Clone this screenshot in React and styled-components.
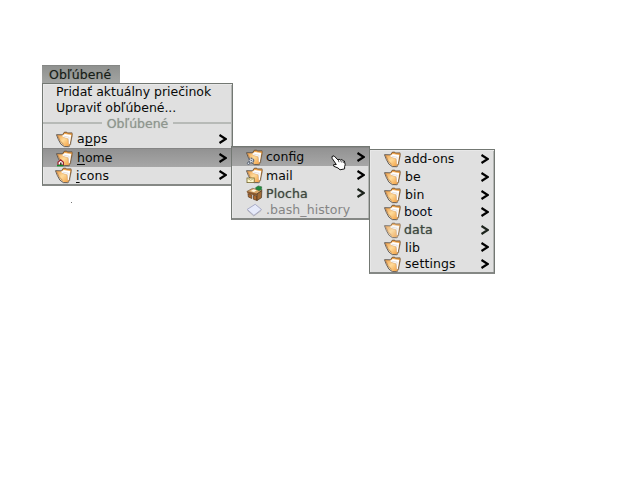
import React from "react";
import styled, { createGlobalStyle, css } from "styled-components";

const GlobalStyle = createGlobalStyle`
  body { margin: 0; background: #fff; overflow: hidden; }
  * { box-sizing: border-box; }
`;

const Desktop = styled.main`
  position: relative;
  width: 640px;
  height: 480px;
  padding: 65px 0 0 42px;
  background: #fff;
  font-family: "DejaVu Sans", sans-serif;
  font-size: 12.5px;
  color: #101210;
  cursor: default;
`;

const MenuTitle = styled.div`
  width: 78px;
  height: 18px;
  padding-left: 7px;
  line-height: 17px;
  letter-spacing: 0.08px;
  color: #171c17;
  background: linear-gradient(#8f918f, #a3a5a3);
  border-top: 1px solid #858785;
  white-space: nowrap;
  text-shadow: 0 0 1px #6b716b;
`;

const Menu = styled.div`
  display: flex;
  flex-direction: column;
  width: ${(p) => p.$width}px;
  height: ${(p) => p.$height}px;
  background: #e0e0e0;
  border: 1px solid #737873;
  border-bottom: 2px solid #858885;
  box-shadow: inset 1px 1px #e8e8e8, inset -1px 0 #b4b6b4;
`;

const Submenu = styled(Menu)`
  position: absolute;
  left: ${(p) => p.$x}px;
  top: ${(p) => p.$y}px;
`;

const Row = styled.div`
  display: flex;
  flex: none;
  align-items: center;
  height: ${(p) => p.$h}px;
  padding-left: ${(p) => p.$inset ?? 13}px;
  padding-right: ${(p) => p.$end ?? 5}px;
  ${(p) =>
    p.$active &&
    css`
      background: linear-gradient(#929292, #a7a7a7);
      border-top: 1px solid #858585;
    `}
`;

const Glyph = styled.svg`
  flex: none;
  width: 18px;
  height: 17px;
  overflow: visible;
`;

const Label = styled.span`
  flex: 1;
  margin-left: ${(p) => p.$gap ?? 3}px;
  margin-top: ${(p) => -(p.$lift ?? 0) * 2}px;
  line-height: 15px;
  white-space: nowrap;
  letter-spacing: ${(p) => p.$track ?? 0}px;
  color: ${(p) => (p.$tone === "muted" ? "#858585" : p.$tone === "soft" ? "#3f483f" : p.$tone === "blue" ? "#050b20" : "#080908")};
  ${(p) => p.$tone === "soft" && css`text-shadow: 0 0 1px #687068;`}
`;

const Key = styled.span`
  text-decoration: underline;
  text-decoration-thickness: 1px;
  text-underline-offset: 2px;
  text-decoration-skip-ink: none;
`;

const Chevron = styled.svg`
  flex: none;
  width: 9px;
  height: 10px;
  margin-top: -1px;
`;

const Separator = styled.div`
  display: flex;
  align-items: center;
  flex: none;
  gap: 5px;
  height: 16px;
  color: #8f968f;
  text-shadow: 0 0 1px #a3aaa3;
  line-height: 16px;
  &::before, &::after {
    content: "";
    height: 2px;
    background: #b7bab7;
    flex: 1;
  }
`;

const SeparatorText = styled.span`
  margin-top: 1px;
`;

const Pointer = styled.svg`
  position: absolute;
  left: 331px;
  top: 155px;
  width: 16px;
  height: 16px;
`;

const Speck = styled.i`
  position: absolute;
  left: 71px;
  top: 202px;
  width: 1px;
  height: 1px;
  background: #777;
`;

function Folder({ badge, soft }) {
  return (
    <Glyph viewBox="0 0 18 17">
      <defs>
        <linearGradient id="folderFace" x1="0" y1="0" x2="1" y2="1">
          <stop offset="0" stopColor="#ed9a44" />
          <stop offset=".5" stopColor="#ffdb9a" />
          <stop offset="1" stopColor="#f2a044" />
        </linearGradient>
      </defs>
      <g opacity={soft ? 0.8 : 1}>
        <path d="M9 15.7l4.6-.4 1.6-2 1.3-8-2 .5z" fill="#666" opacity=".45" />
        <path d="M6.3 4.4L8.2 1.3l2.4-.2.8.9 4.8-.1.3 2-2.5 10.6-3 .8z" fill="#f0a64d" />
        <path d="M6.3 4.2L8.2 1.3l2.4-.2.8.9 4.8-.1" fill="none" stroke="#5c3d22" strokeWidth=".8" />
        <path d="M16.3 2.4l-.3 2.5-2.1 9" fill="none" stroke="#54463b" strokeWidth=".7" />
        <path d="M6 5l2.7-1.9 6.5 1-1.3 8.7-1.6 1.2-3.6-2z" fill="#ffffff" />
        <path d="M7.5 5.1l5.6 1.1-.8 5" fill="none" stroke="#d5cec9" strokeWidth=".6" />
        <path d="M.6 3.8l5.3.2 1.2 2.2 4.9 1.6.8 7.6-4.2.1-4.6-4.2z" fill="url(#folderFace)" />
        <path d="M7.1 6.3L12 7.8l.8 7" fill="none" stroke="#c78442" strokeWidth=".4" />
        <path d="M6 3.8L.5 3.7l1.8 4.7 2.6 4.7 3.4 2.5 4.4.1 1.2-.9" fill="none" stroke="#57504b" strokeWidth=".9" />
        <path d="M2 5.2l2.1 4.5 3.4 3.7" fill="none" stroke="#b88452" strokeWidth=".8" />
      </g>
      {badge === "home" && (
        <g>
          <path d="M2 12.2L4.7 9.8l2.7 2.4v3H2z" fill="#fff" stroke="#9b2230" strokeWidth="1.2" />
          <path d="M4 15v-2.4h1.6V15" fill="#443135" />
          <path d="M1 15.6h6.5" stroke="#148c29" strokeWidth="1.5" />
        </g>
      )}
      {badge === "gear" && (
        <g>
          <circle cx="5.3" cy="11.5" r="2.3" fill="#e4e8ee" stroke="#697180" strokeWidth="1.5" strokeDasharray="1.7 .6" />
          <circle cx="5.3" cy="11.5" r=".8" fill="#626c7c" />
          <circle cx="2.5" cy="14.3" r="1.2" fill="#d7dfe9" stroke="#5c6472" />
        </g>
      )}
      {badge === "mail" && (
        <g stroke="#74652c" strokeWidth=".8">
          <rect x="1" y="11" width="7.2" height="4.6" fill="#fff8cb" />
          <path d="M1.3 11.3l3.4 2 3.3-2" fill="none" stroke="#b0a269" />
        </g>
      )}
    </Glyph>
  );
}

function Desk() {
  return (
    <Glyph viewBox="0 0 18 17">
      <path d="M.8 6.5L6.5 3.4l9.6 2-5 3.6z" fill="#d9a569" stroke="#7b603f" strokeWidth=".7" />
      <path d="M1 6.5l10 2.3-.3 2L1.4 8.5z" fill="#8b572b" />
      <path d="M2 9l3.8.9v3.6L2.4 12zM7.5 10.3l3.5.8v4.4l-3.5-1.2z" fill="#ad682d" stroke="#593c23" strokeWidth=".7" />
      <path d="M11 8.9l4.8-3.3-.3 7.1-4.5 2.8z" fill="#a16c38" stroke="#493522" strokeWidth=".7" />
      <path d="M4.7 6l3-1.7 3.2 1L8 7z" fill="#fff8df" />
      <path d="M9.5 2.8l2.7-1.9 3.7 1-.7 1.7 1 .6-3.4 1.2-2.6-1.2z" fill="#218a3b" stroke="#276b3c" strokeWidth=".6" />
    </Glyph>
  );
}

function FileIcon() {
  return (
    <Glyph viewBox="0 0 18 17">
      <path d="M1.2 8.4l8-5.1 6.3 5.2-7.6 5.9z" fill="#e6eafa" stroke="#a2a5c2" strokeWidth=".9" />
      <path d="M1.4 9.4l6.4 5.6 7.5-5.5" fill="none" stroke="#aaa9b2" strokeWidth=".7" />
    </Glyph>
  );
}

function Arrow({ soft }) {
  return (
    <Chevron viewBox="0 0 9 10">
      <path d="M1.5 1L7.7 5 1.5 9" fill="none" stroke={soft ? "#1d241d" : "#000"} strokeWidth="2.1" />
    </Chevron>
  );
}

function Entry({ h, icon, active, inset, end, gap, tone, track, lift, arrow = true, children }) {
  return (
    <Row $h={h} $active={active} $inset={inset} $end={end}>
      {icon}
      <Label $gap={gap} $tone={tone} $track={track} $lift={lift}>{children}</Label>
      {arrow && <Arrow soft={tone === "soft"} />}
    </Row>
  );
}

export default function App() {
  return (
    <>
      <GlobalStyle />
      <Desktop>
        <MenuTitle>Obľúbené</MenuTitle>
        <Menu $width={191} $height={103}>
          <Entry h={15} gap={0} arrow={false} track={-0.03}>Pridať aktuálny priečinok</Entry>
          <Entry h={16} gap={0} arrow={false} track={-0.04}>Upraviť obľúbené...</Entry>
          <Separator><SeparatorText>Obľúbené</SeparatorText></Separator>
          <Entry h={17} icon={<Folder />} lift={1} track={0.15}><span>a<Key>p</Key>ps</span></Entry>
          <Entry h={19} icon={<Folder badge="home" />} active lift={1}><Key>h</Key>ome</Entry>
          <Entry h={17} icon={<Folder />} inset={12} track={0.15}><Key>i</Key>cons</Entry>
        </Menu>
        <Submenu $x={231} $y={146} $width={139} $height={74}>
          <Entry h={19} end={4} inset={14} gap={2} icon={<Folder badge="gear" />} active lift={1}>config</Entry>
          <Entry h={18} end={4} inset={14} gap={2} icon={<Folder badge="mail" />}>mail</Entry>
          <Entry h={18} end={4} inset={14} gap={2} icon={<Desk />} tone="soft" track={0.1}>Plocha</Entry>
          <Entry h={15} inset={14} gap={2} icon={<FileIcon />} arrow={false} tone="muted" track={0.07}>.bash_history</Entry>
        </Submenu>
        <Submenu $x={369} $y={149} $width={126} $height={125}>
          <Entry h={18} inset={14} gap={2} icon={<Folder />} lift={1}>add-ons</Entry>
          <Entry h={18} icon={<Folder />} inset={14} lift={1}>be</Entry>
          <Entry h={18} icon={<Folder />} inset={14} lift={1}>bin</Entry>
          <Entry h={17} icon={<Folder />} inset={14} gap={2} tone="blue" lift={1}>boot</Entry>
          <Entry h={18} icon={<Folder soft />} inset={14} gap={2} tone="soft" lift={1} track={0.15}>data</Entry>
          <Entry h={17} icon={<Folder />} inset={14}>lib</Entry>
          <Entry h={16} icon={<Folder />} inset={14} lift={1} track={0.1}>settings</Entry>
        </Submenu>
        <Pointer viewBox="0 0 16 16">
          <path d="M1 1.5l2-.7 4 4.2 1-.8 1.6.8 1.3-.5 1.2 1.2 1.3.3.8 3.7-.6 2v2.2l-4.6.9-2-1.8-4.2-1.7-.3-1.6 2.8-.2L1 3.2z" fill="#fff" stroke="#111" />
          <path d="M7.3 5l.7 2.2M9.8 5.2l.6 2.2M12 6.2l.4 1.8" stroke="#222" strokeWidth=".8" />
        </Pointer>
        <Speck />
      </Desktop>
    </>
  );
}
